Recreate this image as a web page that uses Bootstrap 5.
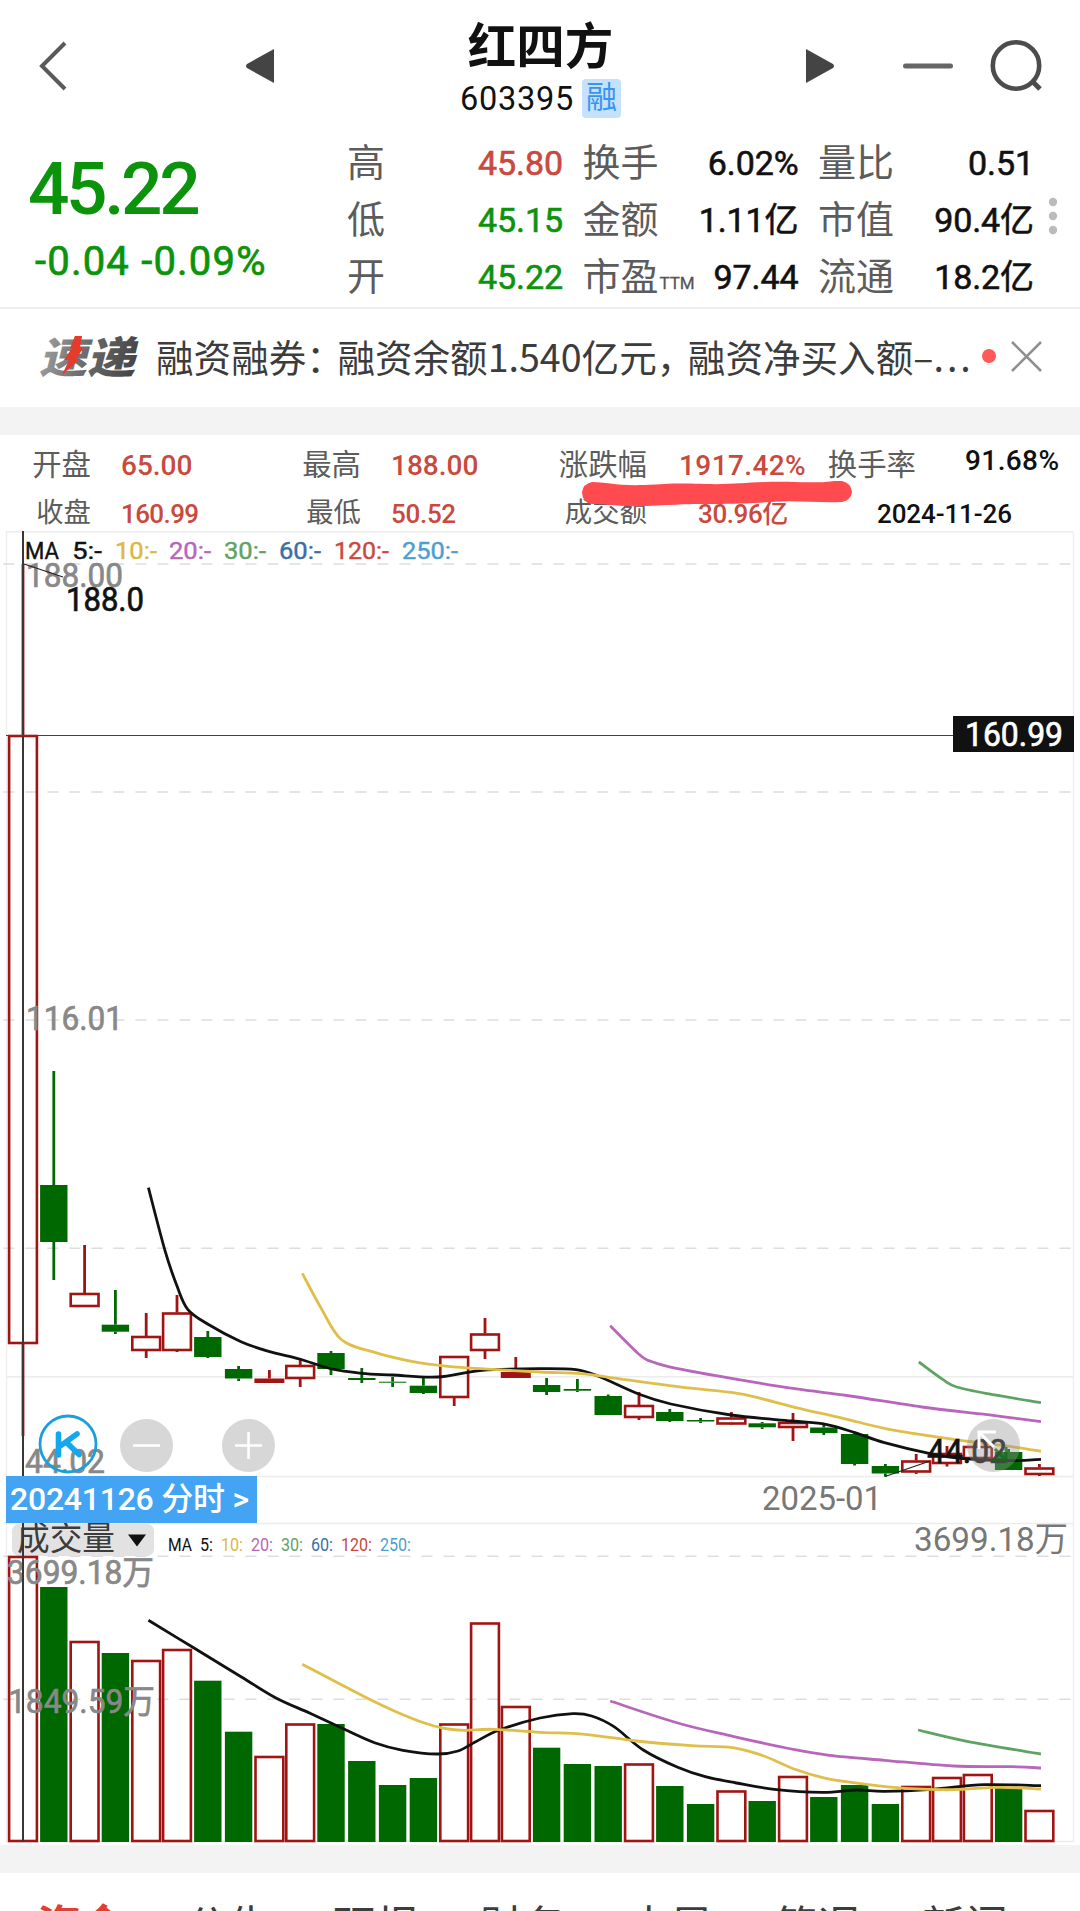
<!DOCTYPE html>
<html lang="zh-CN">
<head>
<meta charset="utf-8">
<meta name="viewport" content="width=device-width, initial-scale=1">
<title>红四方 603395</title>
<link href="https://cdn.jsdelivr.net/npm/bootstrap@5.3.0/dist/css/bootstrap.min.css" rel="stylesheet">
<style>
:root{--up:#c9493d;--down:#0b930b;--ink:#111;--label:#5c5c5c}
body{width:1080px;height:1911px;overflow:hidden;background:#fff;color:var(--ink);font-family:Roboto,"Noto Sans CJK SC",sans-serif;line-height:1}
svg{display:block;flex:none}
.c-up{color:var(--up)}.c-down{color:var(--down)}.c-label{color:var(--label);font-weight:400;-webkit-text-stroke:0}
.topbar{height:130px;padding:0 38px 0 39px}
.topbar .side{width:240px;height:107px}
.stock-title{font:700 48.5px/54px "Noto Sans CJK SC",sans-serif;margin-top:16px}
.stock-code{font-size:32.5px;letter-spacing:.7px;line-height:41px;margin-top:9px}
.rong{width:39px;height:39px;border-radius:4px;background:#c6e1fb;color:#3795ee;font-size:31px;line-height:37px;letter-spacing:0}
.quote{height:177px}
.quote-main{width:347px;padding:23px 0 0 28px}
.last-price{font-size:73px;font-weight:500;letter-spacing:-3.4px;line-height:72px}
.change-line{font-size:40px;font-weight:400;-webkit-text-stroke:.7px;letter-spacing:1.2px;line-height:44px;margin:15px 0 0 7px;white-space:pre}
.stat-grid{display:grid;grid-template-columns:repeat(3,216px);column-gap:19.5px;grid-auto-rows:57px;padding-top:4px;font-size:34px;font-weight:400;-webkit-text-stroke:.6px;letter-spacing:-.1px}
.stat-grid .c-label{font-size:38px;letter-spacing:0}
.ttm{font-size:17px;margin:14px 0 0 1px;color:#555;-webkit-text-stroke:.3px}
.news{height:100px;border-top:2px solid #eee;padding:0 38px 4px 38px}
.news-text{width:824px;margin-left:15px;font:400 37.6px/50px "Noto Sans CJK SC",sans-serif;color:#3c3c3c;white-space:nowrap}
.pun{margin-right:-6.5px}
.dots{letter-spacing:3px}
.band{height:28px;background:#f3f3f3}
.day-info{height:96px;display:grid;grid-template-columns:91px 179px 91px 186px 100px 168px 101px 164px;grid-template-rows:61px 35px;align-items:center;position:relative}
.day-info .c-label{text-align:right;font-size:29.4px}
.day-info .r2.c-label{font-size:27.4px}
.day-info b{font-size:28px;font-weight:500;padding-left:30px;white-space:nowrap}
.day-info b.r2{font-size:26px}
.marker{position:absolute;left:580px;top:45px;z-index:2}
.chart{height:1314px;position:relative}
.round-btn{position:absolute;width:53px;height:53px;border-radius:50%;background:#d7d7d7;padding:0;border:0}
.date-tag{position:absolute;left:6px;top:945px;width:251px;height:47px;background:#44a4f4;color:#fff;font-size:32px;font-weight:500;letter-spacing:-.25px;padding-left:4px;white-space:pre;line-height:46px}
.tabs-row{height:38px;overflow:hidden;padding:24px 0 0 7.5px;font:400 43px/52px "Noto Sans CJK SC",sans-serif;color:#3d3d3d}
.tabs-row span{width:147.3px;text-align:center}
.tabs-row .on{color:#e0402f;font-weight:700;font-size:44px}
</style>
<script src="https://cdn.jsdelivr.net/npm/bootstrap@5.3.0/dist/js/bootstrap.bundle.min.js"></script>
</head>
<body>
<header class="topbar d-flex justify-content-between">
  <div class="side d-flex justify-content-between align-items-center pt-4">
    <svg width="28" height="50" viewBox="0 0 28 50"><path d="M26 2 3 25 26 48" fill="none" stroke="#5a5a5a" stroke-width="4"/></svg>
    <svg width="29" height="34" viewBox="0 0 29 34" style="margin-right:5px"><path d="M29 0V34L2 19Q0 17 2 15Z" fill="#444"/></svg>
  </div>
  <div class="text-center">
    <div class="stock-title">红四方</div>
    <div class="stock-code d-flex justify-content-center">603395<span class="rong ms-2">融</span></div>
  </div>
  <div class="side d-flex justify-content-between align-items-center pt-4">
    <svg width="29" height="34" viewBox="0 0 29 34" style="margin-left:4px"><path d="M0 0V34L27 19Q29 17 27 15Z" fill="#444"/></svg>
    <div class="d-flex align-items-center" style="gap:37px">
      <svg width="50" height="6"><rect width="50" height="5" y=".5" rx="2.5" fill="#666"/></svg>
      <svg width="52" height="52" viewBox="0 0 52 52"><circle cx="26" cy="25.500" r="23.200" fill="none" stroke="#4c4c4c" stroke-width="4.600"/><path d="m43 42 7 7" stroke="#4c4c4c" stroke-width="5"/></svg>
    </div>
  </div>
</header>

<section class="quote d-flex">
  <div class="quote-main c-down">
    <div class="last-price">45.22</div>
    <div class="change-line">-0.04 -0.09%</div>
  </div>
  <div class="stat-grid">
    <div class="d-flex justify-content-between align-items-center"><span class="c-label">高</span><span class="c-up">45.80</span></div>
    <div class="d-flex justify-content-between align-items-center"><span class="c-label">换手</span><span>6.02%</span></div>
    <div class="d-flex justify-content-between align-items-center"><span class="c-label">量比</span><span>0.51</span></div>
    <div class="d-flex justify-content-between align-items-center"><span class="c-label">低</span><span class="c-down">45.15</span></div>
    <div class="d-flex justify-content-between align-items-center"><span class="c-label">金额</span><span>1.11亿</span></div>
    <div class="d-flex justify-content-between align-items-center"><span class="c-label">市值</span><span>90.4亿</span></div>
    <div class="d-flex justify-content-between align-items-center"><span class="c-label">开</span><span class="c-down">45.22</span></div>
    <div class="d-flex justify-content-between align-items-center"><span class="d-flex align-items-center"><span class="c-label">市盈</span><span class="ttm">TTM</span></span><span>97.44</span></div>
    <div class="d-flex justify-content-between align-items-center"><span class="c-label">流通</span><span>18.2亿</span></div>
  </div>
  <svg width="12" height="40" viewBox="0 0 12 40" style="margin:66px 0 0 13px" fill="#bbb"><circle cx="6" cy="6" r="4.200"/><circle cx="6" cy="20" r="4.200"/><circle cx="6" cy="34" r="4.200"/></svg>
</section>

<section class="news d-flex align-items-center">
  <svg width="103" height="42" viewBox="0 0 103 42"><defs><linearGradient id="lg" x1="0" x2="1"><stop offset="0" stop-color="#999"/><stop offset=".5" stop-color="#666"/><stop offset="1" stop-color="#444"/></linearGradient></defs>
    <text transform="translate(9 38) skewX(-14)" font-family="Noto Sans CJK SC" font-weight="900" font-size="43" x="-8" textLength="96" lengthAdjust="spacingAndGlyphs" fill="url(#lg)">速递</text>
    <path d="M37 1H44L42 12H46L38 24H42L24 40 31 25H26L34 13H32Z" fill="#e63a2c"/></svg>
  <div class="news-text">融资融券<span class="pun">：</span>融资余额1.540亿元<span class="pun">，</span>融资净买入额–<span class="dots">...</span></div>
  <svg width="14" height="14" style="margin-left:4px"><circle cx="7" cy="7" r="7" fill="#ff5a57"/></svg>
  <svg width="31" height="31" viewBox="0 0 31 31" style="margin-left:15px"><path d="M1 1 30 30M30 1 1 30" stroke="#8f8f8f" stroke-width="2.600"/></svg>
</section>
<div class="band"></div>

<section class="day-info">
  <span class="c-label">开盘</span><b class="c-up">65.00</b><span class="c-label">最高</span><b class="c-up">188.00</b>
  <span class="c-label">涨跌幅</span><b class="c-up" style="padding-left:32px;letter-spacing:.4px">1917.42%</b><span class="c-label">换手率</span><b style="padding:0 0 9px 49px;letter-spacing:.4px">91.68%</b>
  <span class="c-label r2">收盘</span><b class="c-up r2" style="letter-spacing:-.6px">160.99</b><span class="c-label r2">最低</span><b class="c-up r2" style="letter-spacing:-.3px">50.52</b>
  <span class="c-label r2">成交额</span><b class="c-up r2" style="padding-left:51px;letter-spacing:-.4px">30.96亿</b><b class="r2" style="grid-column:span 2;padding-left:62px;letter-spacing:-.1px">2024-11-26</b>
  <svg class="marker" width="274" height="28" viewBox="0 0 274 28"><path d="M12 2C25 2 38 6 64 5S90 3 125 4 170 1 215 2 240 1 262 1Q271 3 272 12 271 20 262 22C235 23 215 20 190 22S130 24 118 24 90 25 64 26 30 24 12 24Q2 22 2 12 3 4 12 2Z" fill="#ff4b50"/></svg>
</section>

<section class="chart">
  <svg id="plot" width="1080" height="1314" viewBox="0 531 1080 1314" font-family='Roboto,"Noto Sans CJK SC",sans-serif'></svg>
  <div class="date-tag">20241126 分时 &gt;</div>
  <svg style="position:absolute;left:38px;top:883px" width="60" height="60" viewBox="0 0 60 60"><circle cx="30" cy="30" r="28" fill="none" stroke="#1b9fdb" stroke-width="2.800"/><path d="M20.500 20V41M39 20 23 31.500M28 28 41 40.500" fill="none" stroke="#12a7ee" stroke-width="5.600" stroke-linecap="round"/></svg>
  <button class="round-btn" style="left:120px;top:888px" aria-label="缩小"><svg width="53" height="53"><path d="M13 26.500H40" stroke="#fff" stroke-width="2.500"/></svg></button>
  <button class="round-btn" style="left:222px;top:888px" aria-label="放大"><svg width="53" height="53"><path d="M13 26.500H40M26.500 13V40" stroke="#fff" stroke-width="2.500"/></svg></button>
  <button class="round-btn" style="left:967px;top:888px;background:rgba(150,150,150,.4)" aria-label="全屏"><svg width="53" height="53"><path d="M12 30V13H29M13 14 27 28" fill="none" stroke="#fff" stroke-width="3"/><path d="M28 30 39 41V28M39 41H24" fill="none" stroke="#16681c" stroke-opacity=".75" stroke-width="3"/></svg></button>
</section>
<div class="band"></div>
<nav class="tabs-row d-flex"><span class="on">资金</span><span>公告</span><span>研报</span><span>财务</span><span>大局</span><span>简况</span><span>新闻</span></nav>

<script>
const RED='#a01414', GREEN='#006800', STEP=30.8;
// [kind: r hollow red / f filled red / g green, wick top, body top, body bottom, wick bottom, volume top]
const days=[
['r',564,735,1344,1436,1556],['g',1071,1185,1242,1280,1587],['r',1245,1293,1307,1307,1641],['g',1290,1324.7,1331.7,1334,1653],
['r',1313,1336,1351,1358,1660],['r',1295,1312.500,1351,1352,1649],['g',1331,1337,1357,1358,1680.7],['g',1366,1369,1378.5,1381,1731.7],
['f',1370,1378.5,1383,1383,1756],['r',1359,1365,1379,1387,1723.5],['g',1351,1353,1369,1375,1724],['g',1368,1378,1380,1383,1761],
['g',1377,1381.7,1382.7,1387,1785],['g',1377,1385.7,1393,1394,1778],['r',1356,1356,1398,1406,1723.5],['r',1318,1333.5,1351,1359,1622.5],
['f',1357,1372,1378,1378,1706],['g',1378,1385,1392,1395,1747.7],['g',1379,1389,1390.7,1392,1764],['g',1394.5,1396,1415,1415,1766],
['r',1392,1405,1418,1420,1763.5],['g',1409,1412,1421,1422,1786],['g',1418,1420,1421.5,1423,1804],['r',1412,1417.5,1424.5,1425,1790.5],
['g',1422,1423.3,1427.3,1429,1801],['r',1413,1422,1428,1441,1776],['g',1425,1427.5,1433,1435,1797],['g',1433,1434,1464,1465.5,1785],
['g',1464,1466,1473.5,1476.7,1804],['r',1454,1460.5,1472.5,1474,1786],['r',1446,1453,1464,1466.5,1777],['r',1440,1446,1459,1459,1774],
['g',1449,1452,1470,1470,1788],['r',1464,1467.5,1475,1476,1810]];
const lines=[
['#111',[[148.4,1187.7],[165.3,1251.7],[177,1286],[187.7,1309.3],[207.6,1324],[241,1341.7],[268.6,1351.3],[299.6,1359],[330.6,1368.7],[361.6,1373.3],[392.6,1375],[437.3,1377],[482,1370.3],[540,1368.7],[576,1369.7],[598.5,1376.3],[639.2,1394.3],[670.9,1404],[731,1415],[791.4,1421],[825.8,1424.3],[855,1432.7],[884.4,1442.7],[929,1453.3],[963.6,1458.7],[1011.8,1460.7],[1041,1459.3]]],
['#dfbf4a',[[302.3,1273.3],[320.3,1306.7],[341,1339.3],[372,1351.7],[413,1361.7],[447.7,1366.3],[492.4,1369.3],[540,1372],[581.3,1373.7],[608.9,1377.3],[677.7,1386.7],[732.8,1392.7],[760.4,1398.3],[794.8,1407.3],[843,1418.3],[884.4,1428.3],[925.7,1435.3],[973.9,1442],[1011.8,1446.7],[1041,1451.3]]],
['#b866bb',[[610.2,1325.7],[639.9,1355],[652,1361.7],[677.7,1368.7],[732.8,1378.7],[794.8,1388.7],[850,1396],[922,1407],[987.7,1414.7],[1041,1421.7]]],
['#5fa363',[[918.8,1362],[943,1379.7],[956.7,1387],[987.7,1393.7],[1041,1402.7]]],
['#111',[[148.4,1620.3],[192.8,1647.3],[241,1676.7],[275.5,1697.7],[310,1713.3],[344.4,1729.3],[375.3,1743],[402.9,1750.3],[437.3,1754],[458,1751],[475.2,1742],[499.3,1730],[540,1718],[572.7,1713.7],[591.7,1716],[614,1726.7],[643.3,1750],[677.7,1767.3],[705.3,1776.7],[736.3,1783],[774.2,1789.3],[822.4,1792.3],[856.8,1790],[884.4,1791.3],[932.6,1789.3],[984.2,1784.7],[1041,1785.7]]],
['#dfbf4a',[[302.3,1664.3],[365,1697],[396,1711.7],[423.6,1722.7],[444.2,1728.3],[464.9,1730.3],[492.4,1729.3],[540,1732.3],[584.8,1734.3],[636.4,1741],[691.5,1745.7],[732.8,1747.7],[763.8,1756],[794.8,1769.3],[825.8,1778.3],[863.7,1784],[905,1788.3],[953.2,1789.7],[998,1787.3],[1041,1789]]],
['#b866bb',[[610.2,1701],[677.7,1723],[732.8,1736.3],[794.8,1749.7],[829.3,1755.3],[884.4,1760.3],[953.2,1766],[1011.8,1766.7],[1041,1768]]],
['#5fa363',[[918.1,1730],[967,1741.3],[1041,1754]]]];
let s='';
const hline=(y,d)=>s+=`<path d="M${d?3.4:6} ${y}H1073" stroke="${d?'#ddd':'#ececec'}" stroke-width="1.6" ${d?'stroke-dasharray="11 11"':''}/>`;
const text=(x,y,w,size,fill,t,bold)=>s+=`<text x="${x}" y="${y}" font-size="${size}" fill="${fill}" ${bold?`stroke="${fill}" stroke-width="${size>30?.7:.4}"`:''} textLength="${w}" lengthAdjust="spacingAndGlyphs">${t}</text>`;
s+='<path d="M6.500 532V1842M1073.500 532V1842" stroke="#f0f0f0" stroke-width="1.500"/>';
[531.7,1376.7,1476.5,1523.5,1841.5].forEach(y=>hline(y));
[564,792,1020,1248.3,1556.3,1699.3].forEach(y=>hline(y,true));
s+='<rect x="12" y="1524" width="142" height="32" rx="7" fill="#e2e2e2"/>';
days.forEach(([k,wt,t,b,wb,v],i)=>{
  const x=23+STEP*i, c=k==='g'?GREEN:RED;
  if(wt<t) s+=`<path d="M${x} ${wt}V${t}" stroke="${c}" stroke-width="2.800"/>`;
  if(wb>b) s+=`<path d="M${x} ${b}V${wb}" stroke="${c}" stroke-width="2.800"/>`;
  const box=(y1,y2,fill)=>s+= fill
    ? `<rect x="${x-(k==='f'?15:13.7)}" y="${y1}" width="${k==='f'?30:27.4}" height="${y2-y1}" fill="${c}"/>`
    : `<rect x="${x-13.9}" y="${y1+1}" width="27.8" height="${y2-y1-2}" fill="none" stroke="${c}" stroke-width="2.600"/>`;
  box(t,b,k!=='r'); box(v,1842,k==='g');
});
// Catmull-Rom smoothing of the moving averages
lines.forEach(([c,p])=>{
  let d='M'+p[0];
  for(let i=0;i<p.length-1;i++){
    const a=p[i-1]||p[i],b=p[i],e=p[i+1],f=p[i+2]||e;
    d+=`C${b[0]+(e[0]-a[0])/6} ${b[1]+(e[1]-a[1])/6} ${e[0]-(f[0]-b[0])/6} ${e[1]-(f[1]-b[1])/6} ${e[0]} ${e[1]}`;
  }
  s+=`<path d="${d}" fill="none" stroke="${c}" stroke-width="2.800"/>`;
});
const cols=['#111','#111','#dcb83f','#b866bb','#5fa363','#3a6fa5','#c9493d','#4c9fd0'];
[['MA',25,34],['5:-',72,30],['10:-',115,42],['20:-',169,42],['30:-',224,42],['60:-',279,42],['120:-',334,55],['250:-',402,56]].forEach(([t,x,w],i)=>text(x,559,w,23.5,cols[i],t,true));
[['MA',168,24],['5:',200,13],['10:',221,22],['20:',251,22],['30:',281,22],['60:',311,22],['120:',341,31],['250:',380,31]].forEach(([t,x,w],i)=>text(x,1551,w,17.5,cols[i],t));
text(26,587,97,33,'#888','188.00',true); text(66,610.5,78,33,'#111','188.0',true);
text(26,1030,97,33,'#888','116.01',true); text(25,1472.5,80,33,'#888','44.02',true);
text(927,1463,80,33,'#111','44.02',true);
text(762,1510,120,34,'#777','2025-01');
text(914,1551,154,34,'#777','3699.18万');
text(7,1584,147,33,'#888','3699.18万',true); text(8,1713,147,33,'#888','1849.59万',true);
text(17,1550,98,33,'#3c3c3c','成交量');
s+='<path d="M128 1534.500H146L137 1546.500Z" fill="#111"/><path d="M24 564 63 577M885 1476.500 930 1461" stroke="#222" stroke-width="1.200"/>';
s+='<path d="M23 531V1842" stroke="#3b3535" stroke-width="2"/><path d="M6 735.500H953" stroke="#444" stroke-width="1"/><rect x="953" y="716" width="121" height="36" fill="#111"/>';
text(965,745.5,98,32.5,'#fff','160.99',true);
document.getElementById('plot').innerHTML=s;
</script>
</body>
</html>
